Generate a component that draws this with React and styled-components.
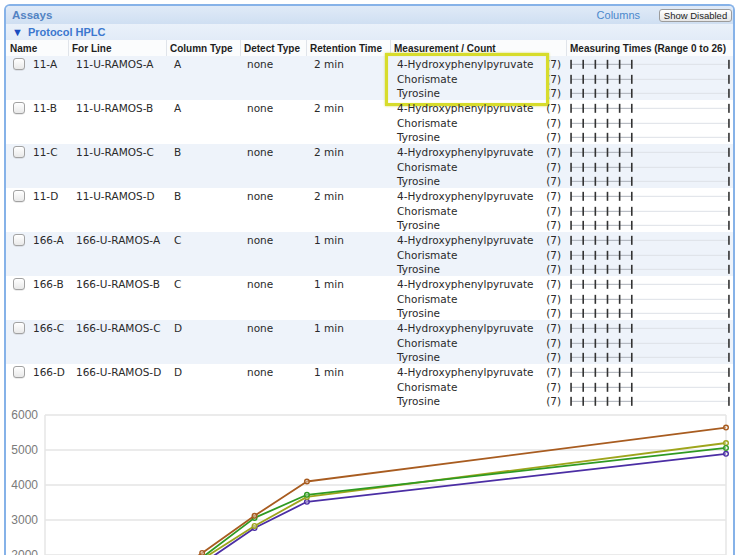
import React from 'react';
import styled, { createGlobalStyle } from 'styled-components';

const GlobalStyle = createGlobalStyle`
  html, body {
    margin: 0;
    padding: 0;
    background: #fff;
  }
  body {
    font-family: "DejaVu Sans", sans-serif;
  }
`;

const COLS = '62px 98px 74px 66px 84px 176px 167px';
const LINE_H = 44 / 3;

const Panel = styled.div`
  margin: 4px 5px 0 4px;
  border: 2px solid #86b2e8;
  border-bottom: none;
  border-radius: 6px 6px 0 0;
  background: #fff;
  overflow: hidden;
`;

const TitleBar = styled.div`
  height: 18px;
  display: flex;
  align-items: center;
  justify-content: space-between;
  padding: 0 1px 0 6px;
  background: linear-gradient(#e0eaf7, #cfdff2);
`;

const Title = styled.span`
  font-family: "Liberation Sans", Arial, sans-serif;
  font-weight: bold;
  font-size: 11.5px;
  color: #5283c3;
`;

const TitleRight = styled.div`
  display: flex;
  align-items: center;
  gap: 19px;
`;

const LinkText = styled.span`
  font-family: "Liberation Sans", Arial, sans-serif;
  font-size: 11px;
  color: #4a88cc;
`;

const SmallButton = styled.button`
  height: 13px;
  width: 73px;
  padding: 0;
  border: 1px solid #9c9c9c;
  border-radius: 3px;
  background: linear-gradient(#ffffff, #e6e6e6);
  font-family: "Liberation Sans", Arial, sans-serif;
  font-size: 9.5px;
  line-height: 11px;
  color: #222;
`;

const ProtocolBar = styled.div`
  height: 16px;
  display: flex;
  align-items: center;
  padding-left: 6px;
  background: linear-gradient(#eaf1fa, #e2ebf7);
  font-family: "Liberation Sans", Arial, sans-serif;
  font-weight: bold;
  font-size: 11px;
  color: #3c78cf;
`;

const Arrow = styled.span`
  font-size: 11px;
  color: #1a4cc0;
  margin-right: 5px;
`;

const HeaderRow = styled.div`
  display: grid;
  grid-template-columns: ${COLS};
  height: 16px;
  background: #fbfcfd;
`;

const HeaderCell = styled.div`
  display: flex;
  align-items: center;
  padding-left: ${(p) => (p.$first ? '4px' : '3px')};
  border-left: ${(p) => (p.$first ? 'none' : '1px solid #e0e4ea')};
  font-family: "Liberation Sans", Arial, sans-serif;
  font-weight: bold;
  font-size: 10px;
  color: #1e1e1e;
  white-space: nowrap;
`;

const Group = styled.div`
  display: grid;
  grid-template-columns: ${COLS};
  height: 44px;
  background: ${(p) => (p.$shaded ? '#eef3fa' : '#fff')};
  font-size: 10.5px;
  color: #2a2a2a;
`;

const Cell = styled.div`
  display: flex;
  align-items: flex-start;
  gap: 8px;
  padding: 1px 0 0 ${(p) => p.$pad || 8}px;
  line-height: ${LINE_H}px;
  white-space: nowrap;
`;

const Check = styled.span`
  width: 10px;
  height: 10px;
  margin-top: 1px;
  border: 1px solid #a2a2a2;
  border-radius: 3px;
  background: linear-gradient(#ffffff, #e9e9e9);
  box-shadow: inset 0 1px 1px rgba(255, 255, 255, 0.9), 0 0.5px 0.5px rgba(0, 0, 0, 0.15);
  flex-shrink: 0;
`;

const MeasureCell = styled.div`
  position: relative;
  display: flex;
  flex-direction: column;
  padding: 1px 5px 0 7px;
`;

const MeasureLine = styled.div`
  display: flex;
  justify-content: space-between;
  height: ${LINE_H}px;
  line-height: ${LINE_H}px;
  white-space: nowrap;
`;

const Highlight = styled.div`
  position: absolute;
  left: -5px;
  top: -3px;
  width: 158px;
  height: 47px;
  border: 3px solid #d7dc2c;
  box-shadow: 0 0 2px rgba(205, 210, 40, 0.8), inset 0 0 1px rgba(205, 210, 40, 0.6);
  pointer-events: none;
`;

const TimesCell = styled.div`
  display: flex;
  flex-direction: column;
  padding-top: 1px;
`;

const TimelineSvg = styled.svg`
  display: block;
  width: 167px;
  height: ${LINE_H}px;
`;

const ChartSvg = styled.svg`
  display: block;
  width: 727px;
  height: 160px;
  font-family: "Liberation Sans", Arial, sans-serif;
`;

const groups = [
  { name: '11-A', line: '11-U-RAMOS-A', col: 'A', ret: '2 min' },
  { name: '11-B', line: '11-U-RAMOS-B', col: 'A', ret: '2 min' },
  { name: '11-C', line: '11-U-RAMOS-C', col: 'B', ret: '2 min' },
  { name: '11-D', line: '11-U-RAMOS-D', col: 'B', ret: '2 min' },
  { name: '166-A', line: '166-U-RAMOS-A', col: 'C', ret: '1 min' },
  { name: '166-B', line: '166-U-RAMOS-B', col: 'C', ret: '1 min' },
  { name: '166-C', line: '166-U-RAMOS-C', col: 'D', ret: '1 min' },
  { name: '166-D', line: '166-U-RAMOS-D', col: 'D', ret: '1 min' },
];

const measurements = ['4-Hydroxyphenylpyruvate', 'Chorismate', 'Tyrosine'];
const times = [0, 2, 4, 6, 8, 10, 26];
const RANGE = 26;

const Timeline = () => {
  const x = (t) => 5 + (t / RANGE) * 158;
  const mid = LINE_H / 2;
  return (
    <TimelineSvg viewBox={`0 0 167 ${LINE_H}`}>
      <line x1={x(0)} y1={mid} x2={x(10)} y2={mid} stroke="#a9aeb6" strokeWidth="1" />
      <line x1={x(10)} y1={mid} x2={x(26)} y2={mid} stroke="#dde1e7" strokeWidth="1" />
      {times.map((t) => (
        <rect key={t} x={x(t) - 0.8} y={mid - 4.5} width="1.6" height="9" fill="#333" />
      ))}
    </TimelineSvg>
  );
};

const series = [
  { color: '#4b2ea4', values: [100, 300, 850, 1750, 2770, 3520, 4890] },
  { color: '#9ea51c', values: [120, 350, 900, 1880, 2830, 3660, 5200] },
  { color: '#2f9a22', values: [130, 380, 950, 1930, 3060, 3720, 5060] },
  { color: '#a85c20', values: [150, 400, 1000, 2060, 3120, 4100, 5640] },
];

const Chart = () => {
  const left = 39;
  const right = 720;
  const top = 7;
  const px = (t) => left + (t / RANGE) * (right - left);
  const py = (v) => top + (6000 - v) * 0.035;
  const ticks = [6000, 5000, 4000, 3000, 2000];
  return (
    <ChartSvg viewBox="0 0 727 160">
      {ticks.map((v) => (
        <g key={v}>
          <line x1={left} y1={py(v)} x2={right} y2={py(v)} stroke="#ebebeb" strokeWidth="2" />
          <text x={32} y={py(v) + 4} textAnchor="end" fontSize="12" fill="#7a7a7a">{v}</text>
        </g>
      ))}
      <line x1={left} y1={top} x2={left} y2={160} stroke="#e6e6e6" strokeWidth="1.5" />
      <line x1={right} y1={top} x2={right} y2={160} stroke="#e6e6e6" strokeWidth="1.5" />
      {series.map((s) => (
        <g key={s.color}>
          <polyline
            points={s.values.map((v, i) => `${px(times[i])},${py(v)}`).join(' ')}
            fill="none"
            stroke={s.color}
            strokeWidth="1.8"
            strokeLinejoin="round"
          />
          {s.values.map((v, i) => (
            <circle key={i} cx={px(times[i])} cy={py(v)} r="2.3" fill="#fff" fillOpacity="0.4" stroke={s.color} strokeWidth="1.4" />
          ))}
        </g>
      ))}
    </ChartSvg>
  );
};

export default function App() {
  return (
    <>
      <GlobalStyle />
      <Panel>
        <TitleBar>
          <Title>Assays</Title>
          <TitleRight>
            <LinkText>Columns</LinkText>
            <SmallButton>Show Disabled</SmallButton>
          </TitleRight>
        </TitleBar>
        <ProtocolBar>
          <Arrow>▼</Arrow>Protocol HPLC
        </ProtocolBar>
        <HeaderRow>
          <HeaderCell $first>Name</HeaderCell>
          <HeaderCell>For Line</HeaderCell>
          <HeaderCell>Column Type</HeaderCell>
          <HeaderCell>Detect Type</HeaderCell>
          <HeaderCell>Retention Time</HeaderCell>
          <HeaderCell>Measurement / Count</HeaderCell>
          <HeaderCell>Measuring Times (Range 0 to 26)</HeaderCell>
        </HeaderRow>
        {groups.map((g, i) => (
          <Group key={g.name} $shaded={i % 2 === 0}>
            <Cell $pad={7}>
              <Check />
              {g.name}
            </Cell>
            <Cell>{g.line}</Cell>
            <Cell>{g.col}</Cell>
            <Cell $pad={7}>none</Cell>
            <Cell>{g.ret}</Cell>
            <MeasureCell>
              {measurements.map((m) => (
                <MeasureLine key={m}>
                  <span>{m}</span>
                  <span>(7)</span>
                </MeasureLine>
              ))}
              {i === 0 && <Highlight />}
            </MeasureCell>
            <TimesCell>
              {measurements.map((m) => (
                <Timeline key={m} />
              ))}
            </TimesCell>
          </Group>
        ))}
        <Chart />
      </Panel>
    </>
  );
}
